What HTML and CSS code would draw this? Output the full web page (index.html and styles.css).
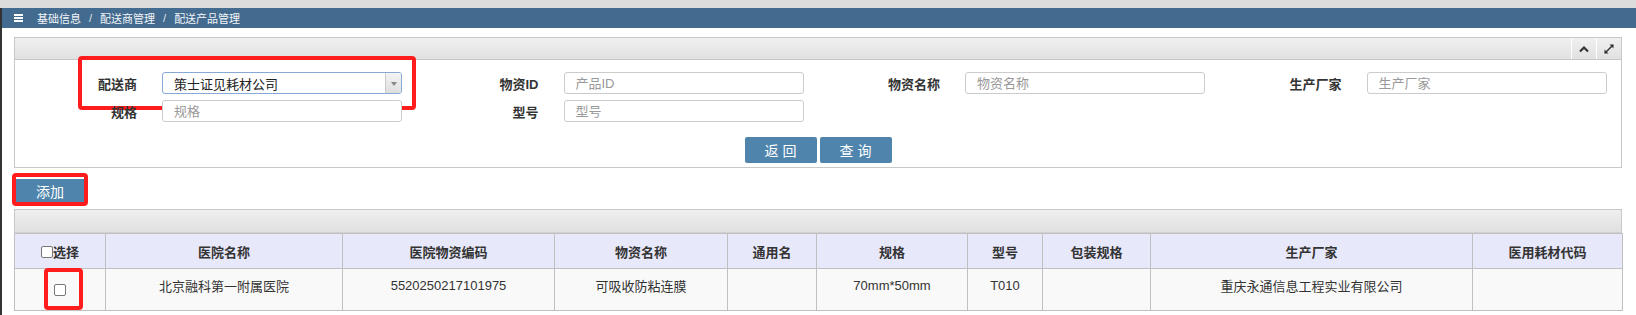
FILE: index.html
```html
<!DOCTYPE html>
<html lang="zh-CN">
<head>
    <meta charset="UTF-8">
    <title>配送产品管理</title>
    <link rel="stylesheet" href="styles.css">
</head>
<body>
    <div class="top-gap"></div>
    <div class="page">
        <div class="navbar">
            <span class="menu-icon"><i></i><i></i><i></i></span>
            <span class="crumb">基础信息</span>
            <span class="sep">/</span>
            <span class="crumb">配送商管理</span>
            <span class="sep">/</span>
            <span class="crumb">配送产品管理</span>
        </div>

        <div class="content">
            <!-- search panel -->
            <div class="panel">
                <div class="panel-head">
                    <span class="tool">
                        <svg width="10" height="8" viewBox="0 0 10 8"><path d="M1 6.5 L5 2.5 L9 6.5" fill="none" stroke="#333" stroke-width="2.2"/></svg>
                    </span>
                    <span class="tool">
                        <svg width="12" height="12" viewBox="0 0 12 12"><path d="M2 10 L10 2" stroke="#333" stroke-width="1.4"/><path d="M6.5 1.5 H10.5 V5.5 Z" fill="#333"/><path d="M1.5 6.5 V10.5 H5.5 Z" fill="#333"/></svg>
                    </span>
                </div>
                <div class="panel-body">
                    <div class="form-grid">
                        <div class="field marked">
                            <label>配送商</label>
                            <div class="select">
                                <span>策士证见耗材公司</span>
                                <span class="select-arrow"></span>
                            </div>
                        </div>
                        <div class="field">
                            <label>物资ID</label>
                            <input type="text" placeholder="产品ID">
                        </div>
                        <div class="field">
                            <label>物资名称</label>
                            <input type="text" placeholder="物资名称">
                        </div>
                        <div class="field">
                            <label>生产厂家</label>
                            <input type="text" placeholder="生产厂家">
                        </div>
                        <div class="field">
                            <label>规格</label>
                            <input type="text" placeholder="规格">
                        </div>
                        <div class="field">
                            <label>型号</label>
                            <input type="text" placeholder="型号">
                        </div>
                    </div>
                    <div class="actions">
                        <button class="btn">返 回</button>
                        <button class="btn">查 询</button>
                    </div>
                </div>
            </div>

            <div class="toolbar">
                <button class="btn btn-add">添加</button>
            </div>

            <!-- result grid -->
            <div class="grid-panel">
                <div class="grid-head"></div>
                <table class="grid">
                    <colgroup>
                        <col style="width:91px">
                        <col style="width:237px">
                        <col style="width:212px">
                        <col style="width:173px">
                        <col style="width:89px">
                        <col style="width:151px">
                        <col style="width:75px">
                        <col style="width:108px">
                        <col style="width:322px">
                        <col style="width:150px">
                    </colgroup>
                    <thead>
                        <tr>
                            <th><span class="check"></span>选择</th>
                            <th>医院名称</th>
                            <th>医院物资编码</th>
                            <th>物资名称</th>
                            <th>通用名</th>
                            <th>规格</th>
                            <th>型号</th>
                            <th>包装规格</th>
                            <th>生产厂家</th>
                            <th>医用耗材代码</th>
                        </tr>
                    </thead>
                    <tbody>
                        <tr>
                            <td class="pick"><span class="check marked-check"></span></td>
                            <td>北京融科第一附属医院</td>
                            <td>5520250217101975</td>
                            <td>可吸收防粘连膜</td>
                            <td></td>
                            <td>70mm*50mm</td>
                            <td>T010</td>
                            <td></td>
                            <td>重庆永通信息工程实业有限公司</td>
                            <td></td>
                        </tr>
                    </tbody>
                </table>
            </div>
        </div>
    </div>
</body>
</html>
```

FILE: styles.css
```css
:root {
    --nav-blue: #436b8f;
    --btn-blue: #4f85ad;
    --line: #c8c8c8;
    --mark-red: #ff1c1c;
}

* {
    margin: 0;
    padding: 0;
    box-sizing: border-box;
}

body {
    background: #fff;
    font-family: "Liberation Sans", "Noto Sans CJK SC", sans-serif;
    font-size: 13px;
    color: #333;
    overflow: hidden;
}

.top-gap {
    height: 8px;
    background: #dcdcdc;
}

.page {
    border-left: 2px solid #333;
    height: 307px;
}

/* breadcrumb bar */
.navbar {
    height: 20px;
    background: var(--nav-blue);
    display: flex;
    align-items: center;
    padding-left: 12px;
    color: #fff;
    font-size: 11px;
}

.menu-icon {
    display: flex;
    flex-direction: column;
    gap: 1px;
    width: 9px;
    margin-right: 14px;
}

.menu-icon i {
    display: block;
    height: 2px;
    background: #fff;
}

.crumb {
    color: #f2f5f8;
}

.sep {
    margin: 0 8px;
    color: #dfe6ee;
}

.content {
    padding: 9px 14px 0 12px;
}

/* panels */
.panel {
    border: 1px solid var(--line);
}

.panel-head {
    height: 22px;
    background: linear-gradient(#f0f0f0, #e1e1e1);
    border-bottom: 1px solid var(--line);
    display: flex;
    justify-content: flex-end;
}

.tool {
    width: 25px;
    display: flex;
    align-items: center;
    justify-content: center;
    border-left: 1px solid #fff;
}

.panel-body {
    padding: 12px 0 4px;
}

.form-grid {
    display: grid;
    grid-template-columns: repeat(4, 1fr);
    row-gap: 6px;
}

.field {
    display: flex;
    align-items: center;
    position: relative;
}

.field label {
    width: 122px;
    margin-right: 25px;
    text-align: right;
    font-weight: bold;
    color: #333;
}

.field input,
.select {
    width: 240px;
    height: 22px;
    border: 1px solid #ccc;
    border-radius: 3px;
    padding-left: 11px;
    font-family: inherit;
    font-size: 13px;
    color: #333;
    outline: none;
}

.field input::placeholder {
    color: #999;
}

.select {
    display: flex;
    align-items: center;
    justify-content: space-between;
    border-color: #86a9d6;
    overflow: hidden;
    color: #222;
}

.select-arrow {
    width: 16px;
    height: 100%;
    border-left: 1px solid #ccc;
    background: linear-gradient(#f4f4f4, #dedede);
    position: relative;
}

.select-arrow::after {
    content: '';
    position: absolute;
    left: 5px;
    top: 9px;
    border-left: 3px solid transparent;
    border-right: 3px solid transparent;
    border-top: 4px solid #888;
}

/* red annotation frames */
.marked::after {
    content: '';
    position: absolute;
    left: 63px;
    top: -16px;
    width: 330px;
    height: 46px;
    border: 4px solid var(--mark-red);
    border-radius: 4px;
}

.actions {
    display: flex;
    justify-content: center;
    gap: 3px;
    margin-top: 15px;
}

.btn {
    width: 72px;
    height: 26px;
    background: var(--btn-blue);
    color: #fff;
    border: none;
    border-radius: 2px;
    font-family: inherit;
    font-size: 14px;
}

.toolbar {
    padding: 11px 0 7px 2px;
}

.btn-add {
    width: 68px;
    height: 23px;
    border-radius: 0;
    position: relative;
}

.btn-add::after {
    content: '';
    position: absolute;
    left: -4px;
    top: -6px;
    right: -4px;
    bottom: -4px;
    border: 4px solid var(--mark-red);
    border-radius: 4px;
}

.grid-panel {
    border-top: 1px solid var(--line);
}

.grid-head {
    height: 23px;
    background: linear-gradient(#efefef, #e0e0e0);
    border-left: 1px solid var(--line);
    border-right: 1px solid var(--line);
    border-bottom: 1px solid #d0d0d0;
}

.grid {
    width: 1608px;
    border-collapse: collapse;
    table-layout: fixed;
}

.grid th,
.grid td {
    border: 1px solid #c0c0c0;
    text-align: center;
    color: #333;
}

.grid th {
    height: 35px;
    background: #e7e8fa;
    font-weight: bold;
}

.grid td {
    height: 42px;
    background: #f9f9f9;
    vertical-align: middle;
    padding-bottom: 8px;
}

.check {
    display: inline-block;
    width: 12px;
    height: 12px;
    border: 1px solid #777;
    border-radius: 2px;
    background: #fff;
    vertical-align: -1px;
}

.grid td.pick {
    vertical-align: top;
    padding: 15px 0 0;
    line-height: 0;
}

.pick .check {
    vertical-align: top;
}

.marked-check {
    position: relative;
}

.marked-check::after {
    content: '';
    position: absolute;
    left: -11px;
    top: -17px;
    width: 31px;
    height: 34px;
    border: 4px solid var(--mark-red);
    border-radius: 4px;
}
```
